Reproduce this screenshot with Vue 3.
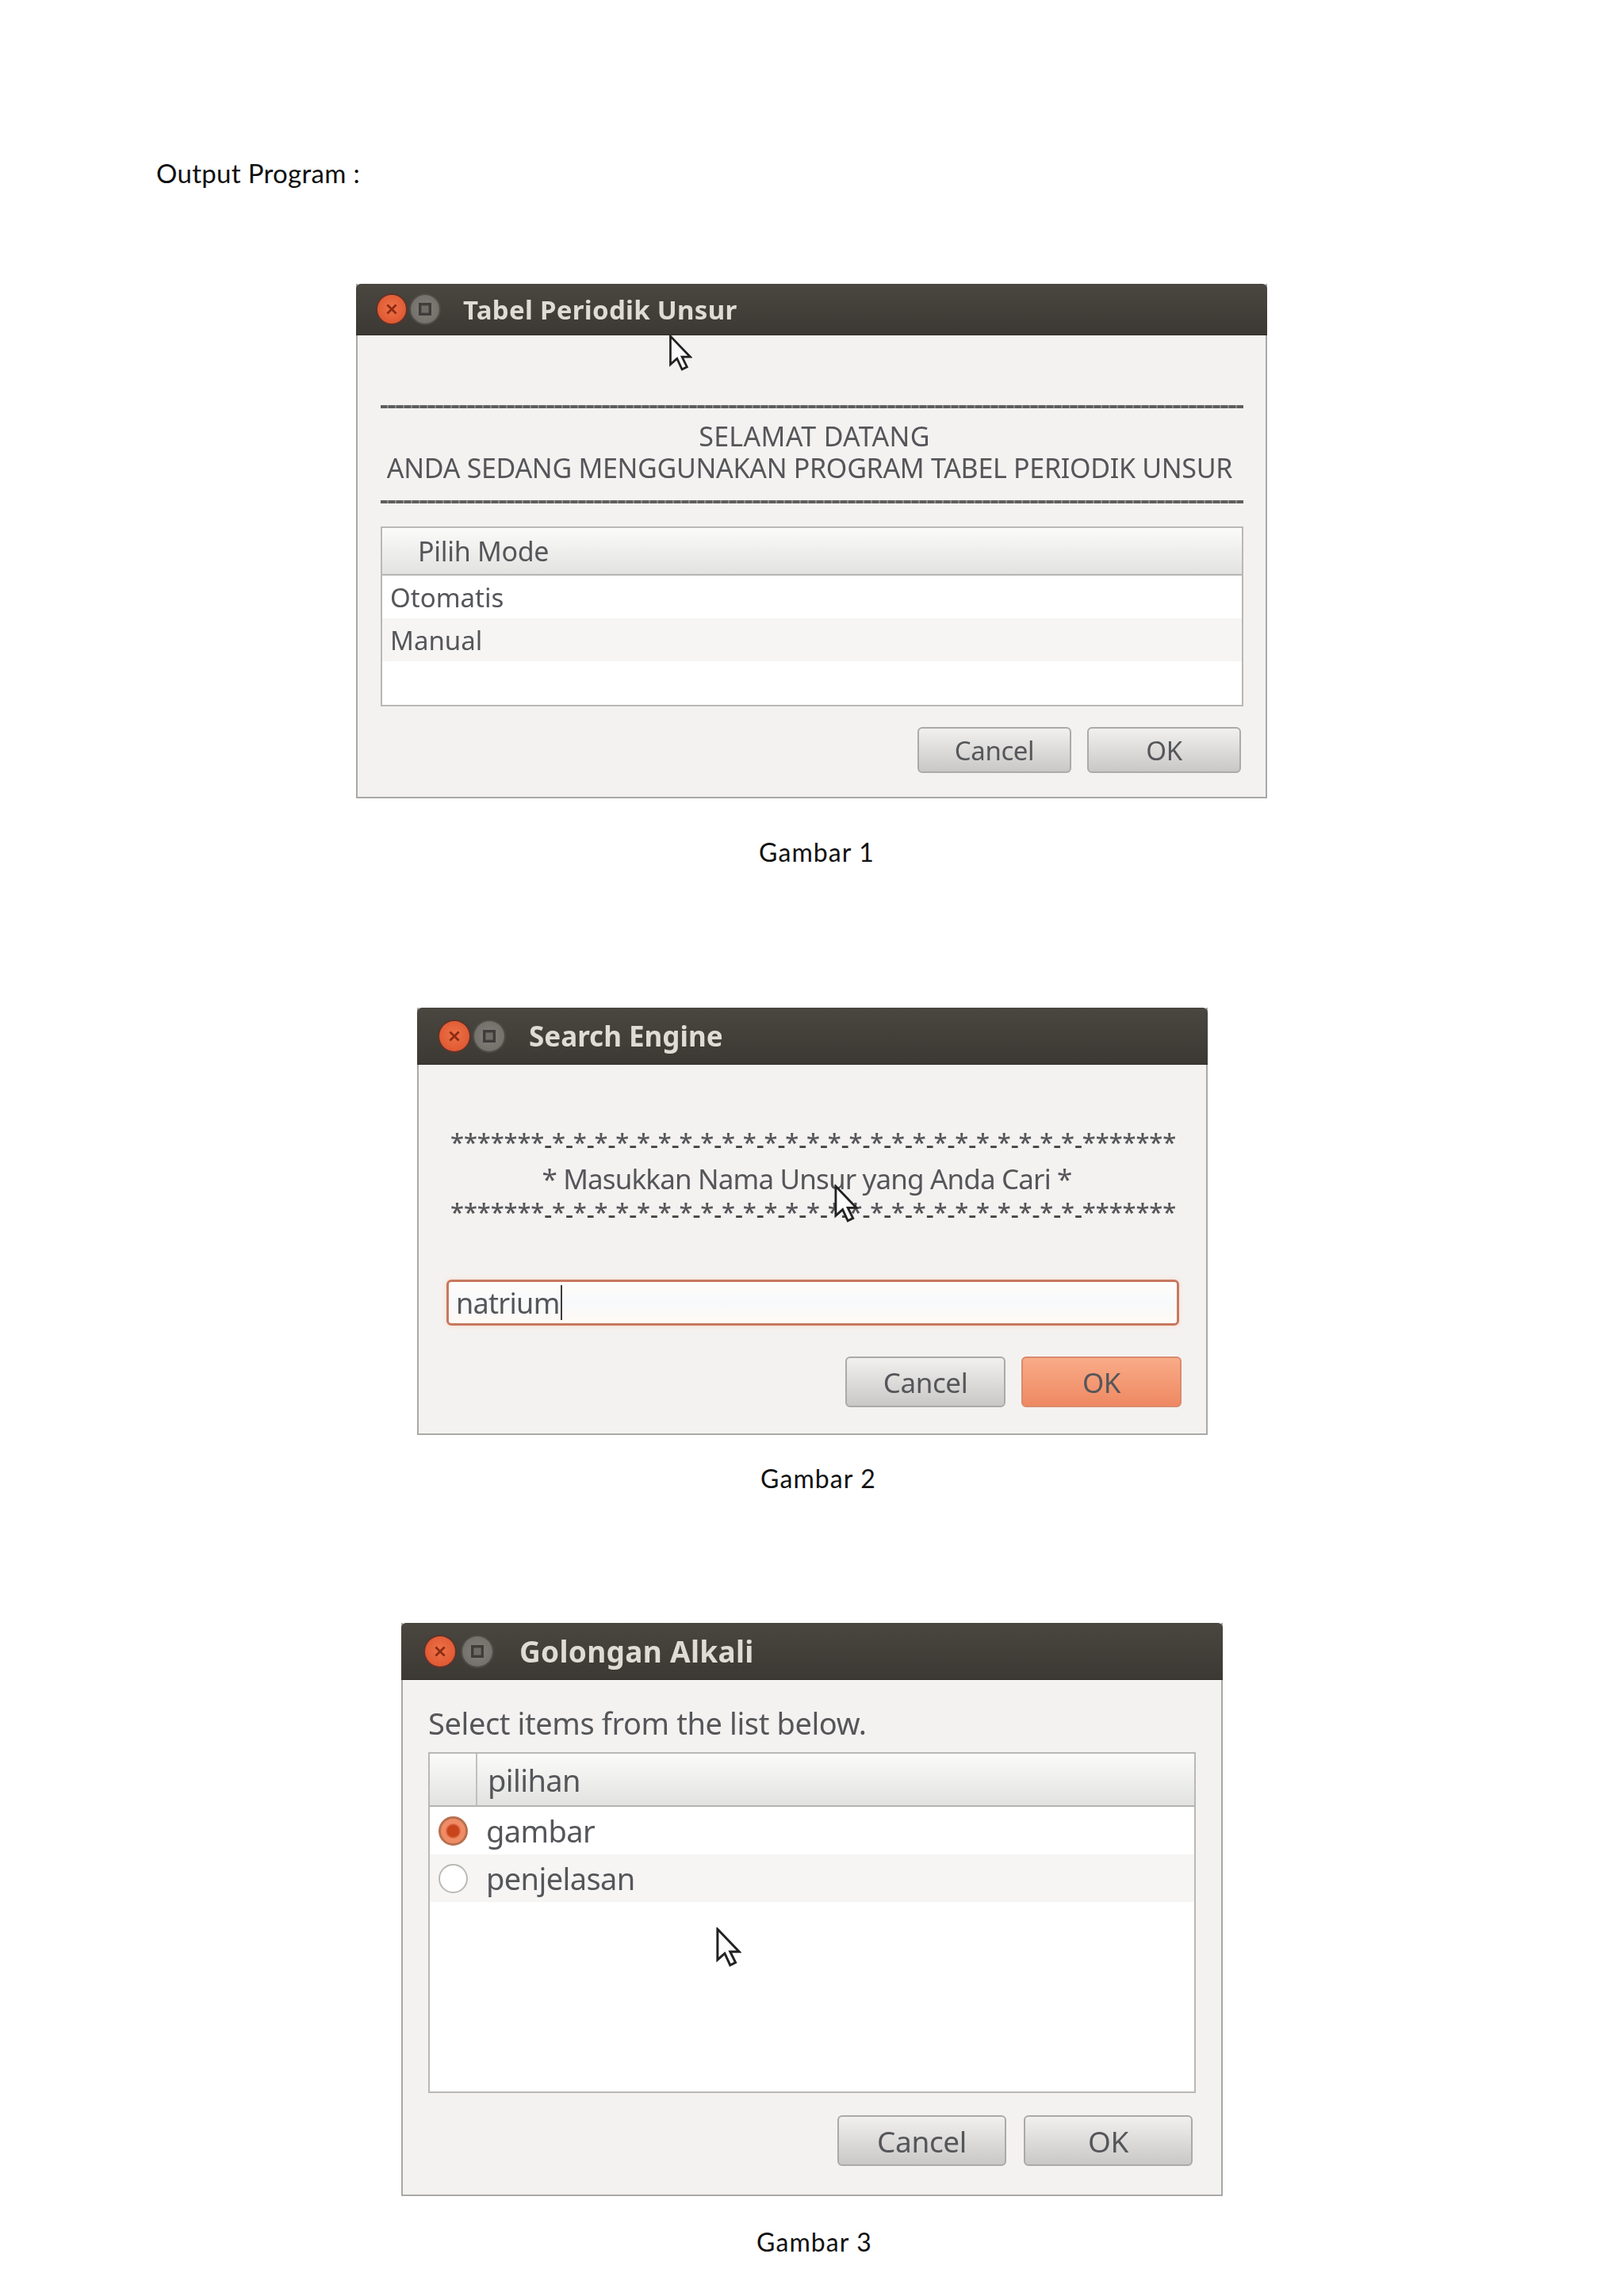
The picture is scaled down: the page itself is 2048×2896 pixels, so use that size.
<script setup>
const starLine = ('*******' + '-*'.repeat(25) + '-*******').split('')
</script>

<template>
  <main class="page">
    <p class="heading">Output Program :</p>

    <section class="win win-one">
      <header class="bar">
        <span class="ctl close"><svg viewBox="0 0 20 20"><path d="M6 6l8 8M14 6l-8 8" /></svg></span>
        <span class="ctl max"><svg viewBox="0 0 20 20"><rect x="5.5" y="5.5" width="9" height="9" /></svg></span>
        <h2 class="bar-title">Tabel Periodik Unsur</h2>
      </header>
      <div class="one-body">
        <div class="rule"></div>
        <div class="welcome">
          <div class="line-a">SELAMAT DATANG</div>
          <div class="line-b">ANDA SEDANG MENGGUNAKAN PROGRAM TABEL PERIODIK UNSUR</div>
        </div>
        <div class="rule rule-low"></div>
        <div class="table one-table">
          <div class="thead one-head"><span>Pilih Mode</span></div>
          <div class="row one-row">Otomatis</div>
          <div class="row one-row alt">Manual</div>
        </div>
        <div class="actions one-actions">
          <button class="btn one-btn">Cancel</button>
          <button class="btn one-btn">OK</button>
        </div>
      </div>
      <svg class="cursor cursor-one" viewBox="0 0 28 44"><path d="M2 2v34l8-7 6 13 6-3-6-12h10z" /></svg>
    </section>
    <p class="caption cap-one">Gambar 1</p>

    <section class="win win-two">
      <header class="bar bar-tall">
        <span class="ctl close"><svg viewBox="0 0 20 20"><path d="M6 6l8 8M14 6l-8 8" /></svg></span>
        <span class="ctl max"><svg viewBox="0 0 20 20"><rect x="5.5" y="5.5" width="9" height="9" /></svg></span>
        <h2 class="bar-title">Search Engine</h2>
      </header>
      <div class="two-body">
        <div class="stars"><span v-for="(c, i) in starLine" :key="i" :class="{ tick: c === '-' }">{{ c }}</span></div>
        <div class="prompt">* Masukkan Nama Unsur yang Anda Cari *</div>
        <div class="stars"><span v-for="(c, i) in starLine" :key="i" :class="{ tick: c === '-' }">{{ c }}</span></div>
        <div class="field"><span>natrium</span><i class="caret"></i></div>
        <div class="actions two-actions">
          <button class="btn two-btn">Cancel</button>
          <button class="btn two-btn primary">OK</button>
        </div>
      </div>
      <svg class="cursor cursor-two" viewBox="0 0 28 44"><path d="M2 2v34l8-7 6 13 6-3-6-12h10z" /></svg>
    </section>
    <p class="caption cap-two">Gambar 2</p>

    <section class="win win-three">
      <header class="bar bar-tall">
        <span class="ctl close"><svg viewBox="0 0 20 20"><path d="M6 6l8 8M14 6l-8 8" /></svg></span>
        <span class="ctl max"><svg viewBox="0 0 20 20"><rect x="5.5" y="5.5" width="9" height="9" /></svg></span>
        <h2 class="bar-title">Golongan Alkali</h2>
      </header>
      <div class="three-body">
        <p class="instruction">Select items from the list below.</p>
        <div class="table three-table">
          <div class="thead three-head"><span class="check-col"></span><span class="name-col">pilihan</span></div>
          <div class="row three-row">
            <span class="radio on"></span><span>gambar</span>
          </div>
          <div class="row three-row alt">
            <span class="radio"></span><span>penjelasan</span>
          </div>
        </div>
        <div class="actions three-actions">
          <button class="btn three-btn">Cancel</button>
          <button class="btn three-btn">OK</button>
        </div>
      </div>
      <svg class="cursor cursor-three" viewBox="0 0 28 44"><path d="M2 2v34l8-7 6 13 6-3-6-12h10z" /></svg>
    </section>
    <p class="caption cap-three">Gambar 3</p>
  </main>
</template>

<style scoped>
.page {
  width: 2048px;
  height: 2896px;
  padding-top: 198px;
  box-sizing: border-box;
  display: flex;
  flex-direction: column;
  align-items: flex-start;
  background: #fff;
  font-family: "Lato", "Noto Sans", sans-serif;
  overflow: hidden;
}
.heading {
  margin: 0 0 0 197px;
  height: 40px;
  line-height: 40px;
  font-size: 33px;
  letter-spacing: 0.3px;
  color: #111;
}
.caption {
  margin: 0;
  height: 40px;
  line-height: 40px;
  font-size: 32px;
  letter-spacing: 1.1px;
  color: #111;
}
.cap-one { margin: 48px 0 0 957px; }
.cap-two { margin: 35px 0 0 959px; }
.cap-three { margin: 38px 0 0 954px; }

.win {
  position: relative;
  box-sizing: border-box;
  display: flex;
  flex-direction: column;
  background: #f4f2f0;
  border: 2px solid #a9a9a7;
  border-top: 0;
  font-family: "Noto Sans", "Open Sans", sans-serif;
  color: #55565a;
  filter: blur(0.7px);
}
.win-one { width: 1149px; height: 649px; margin: 120px 0 0 449px; }
.win-two { width: 997px; height: 539px; margin: 176px 0 0 526px; }
.win-three { width: 1036px; height: 723px; margin: 162px 0 0 506px; }

.bar {
  flex: none;
  height: 65px;
  margin: 0 -2px;
  display: flex;
  align-items: center;
  padding-left: 27px;
  background: linear-gradient(#4a4640, #3c3934);
  border-radius: 6px 6px 0 0;
  border-bottom: 1px solid #2e2b28;
  box-sizing: border-box;
}
.bar-tall { height: 72px; }
.ctl {
  flex: none;
  width: 36px;
  height: 36px;
  border-radius: 50%;
  display: flex;
  align-items: center;
  justify-content: center;
}
.ctl svg { width: 28px; height: 28px; fill: none; }
.close { background: radial-gradient(circle at 50% 45%, #ef7248, #d9502a); box-shadow: 0 0 0 2px #5d332a; }
.close path { stroke: #8d2c14; stroke-width: 2; }
.max { margin-left: 6px; background: radial-gradient(circle, #83807a, #6e6b66); box-shadow: 0 0 0 2px #4f4c47; }
.max rect { stroke: #3f3d39; stroke-width: 2.4; fill: #6f6c67; }
.bar-title {
  margin: 0 0 0 30px;
  font-family: "Noto Sans", sans-serif;
  font-size: 33px;
  font-weight: 700;
  letter-spacing: 0.3px;
  color: #dfdcd5;
  white-space: nowrap;
}
.win-two .ctl, .win-three .ctl { width: 38px; height: 38px; }
.win-two .bar { padding-left: 28px; }
.win-two .bar-title { margin-left: 31px; font-size: 35px; letter-spacing: 0; }
.win-three .bar { padding-left: 30px; }
.win-three .bar-title { margin-left: 34px; font-size: 37px; letter-spacing: 0.3px; }
.win-three .max { margin-left: 9px; }

.one-body { padding: 88px 28px 0 29px; }
.rule {
  height: 4px;
  background: repeating-linear-gradient(90deg, #5f5f5f 0 8px, #8a8a8a 8px 10px);
}
.rule-low { margin-top: 21px; }
.welcome {
  margin-top: 15px;
  text-align: center;
  font-size: 34px;
  line-height: 40px;
  white-space: nowrap;
}
.line-a { padding-left: 6px; letter-spacing: 0.3px; }
.line-b { margin-left: -6px; letter-spacing: -0.3px; }

.table {
  box-sizing: border-box;
  background: #fff;
  border: 2px solid #b8b8b6;
}
.one-table { margin-top: 29px; height: 227px; }
.thead {
  background: linear-gradient(#fbfbfa, #e2e2e0);
  border-bottom: 2px solid #b4b4b2;
  box-sizing: border-box;
  display: flex;
  align-items: center;
}
.one-head { height: 60px; padding-left: 45px; font-size: 34px; letter-spacing: -0.3px; }
.row { display: flex; align-items: center; box-sizing: border-box; }
.alt { background: #f6f5f4; }
.one-row { height: 54px; padding-left: 10px; font-size: 33px; letter-spacing: 0; }

.actions { display: flex; justify-content: flex-end; }
.btn {
  box-sizing: border-box;
  border: 2px solid #aaaaa8;
  border-radius: 6px;
  background: linear-gradient(#f1f0ee, #c9c8c6);
  font-family: "Noto Sans", sans-serif;
  color: #55565a;
  padding: 0;
}
.one-actions { margin-top: 26px; gap: 20px; padding-right: 3px; }
.one-btn { width: 194px; height: 58px; font-size: 33px; letter-spacing: -0.4px; }

.two-body { padding: 0 34px 0 35px; }
.stars {
  margin-top: 72px;
  padding-left: 5px;
  height: 34px;
  line-height: 34px;
  font-size: 31px;
  letter-spacing: -0.1px;
  white-space: nowrap;
  font-weight: 500;
}
.tick { position: relative; top: 3px; color: #444; }
.two-body .stars:first-child { margin-top: 80px; }
.two-body .prompt + .stars { margin-top: 4px; }
.prompt {
  margin-top: 10px;
  padding-right: 15px;
  height: 40px;
  line-height: 40px;
  font-size: 35px;
  letter-spacing: -0.85px;
  text-align: center;
  white-space: nowrap;
}
.field {
  box-sizing: border-box;
  margin-top: 69px;
  height: 58px;
  display: flex;
  align-items: center;
  padding-left: 9px;
  border: 3px solid #c8785e;
  border-radius: 6px;
  background: linear-gradient(#fffdfa, #f7f9fb 50%, #fffaf4);
  box-shadow: 0 0 6px #f6d9cc;
  font-size: 36px;
  letter-spacing: -0.7px;
}
.caret { width: 2px; height: 44px; margin-left: 1px; background: #3c3c3c; }
.two-actions { margin-top: 39px; gap: 20px; margin-right: -3px; }
.two-btn { width: 202px; height: 64px; font-size: 35px; letter-spacing: -0.4px; }
.primary { background: linear-gradient(#f9ab87, #ee8962); border-color: #d98a6c; }

.three-body { padding: 0 32px 0 32px; }
.instruction {
  margin: 30px 0 0 0;
  height: 48px;
  line-height: 48px;
  font-size: 38px;
  letter-spacing: -0.4px;
  white-space: nowrap;
}
.three-table { margin-top: 13px; height: 430px; }
.three-head { height: 67px; }
.check-col { width: 60px; height: 100%; border-right: 2px solid #c0c0be; box-sizing: border-box; }
.name-col { padding-left: 13px; font-size: 38px; letter-spacing: -0.6px; }
.three-row { height: 60px; font-size: 38px; gap: 23px; padding-left: 11px; letter-spacing: -0.6px; }
.radio {
  box-sizing: border-box;
  width: 37px;
  height: 37px;
  border-radius: 50%;
  border: 2px solid #b9b9b5;
  background: #fff;
}
.radio.on {
  border: 3px solid #b8704f;
  background: radial-gradient(circle, #c8451c 0 7px, #ef8c66 10px);
}
.three-actions { margin-top: 28px; gap: 22px; padding-right: 4px; }
.three-btn { width: 213px; height: 64px; font-size: 37px; letter-spacing: -0.4px; }

.cursor {
  position: absolute;
  stroke: #222;
  stroke-width: 2.6;
  stroke-linejoin: miter;
  fill: #fbfbfb;
}
.cursor-one { left: 392px; top: 64px; width: 30px; height: 46px; }
.cursor-two { left: 523px; top: 223px; width: 32px; height: 48px; }
.cursor-three { left: 394px; top: 384px; width: 33px; height: 50px; }
</style>

<style>
html, body { margin: 0; background: #fff; }
</style>
